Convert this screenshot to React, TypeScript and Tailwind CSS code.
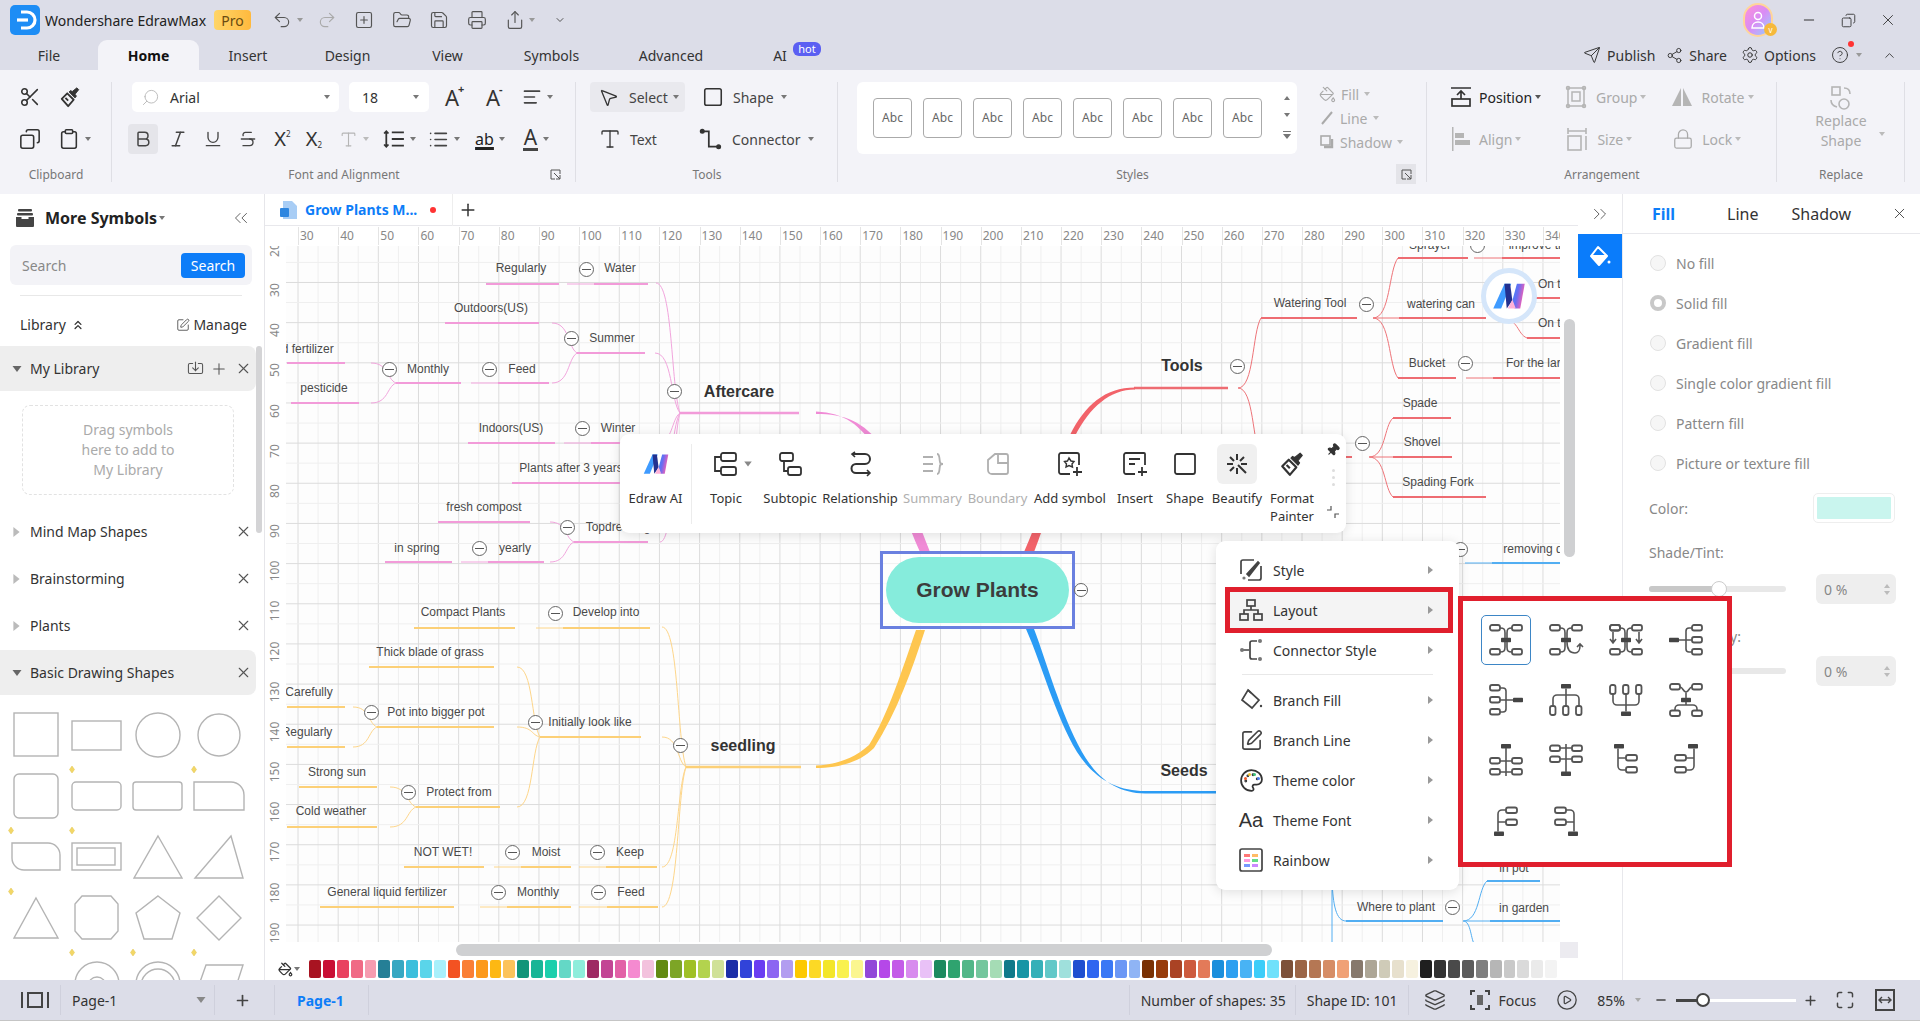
import React from 'react';
import {
  AlignLeft, Bold, ChevronDown, ChevronUp, ChevronsLeft, ChevronsRight, ChevronsUp, CircleHelp, CirclePlay,
  Clipboard, Copy, FolderOpen, Import, Italic, Layers, List, Lock, Maximize, Minus, MousePointer2, PaintBucket,
  Palette, Pin, Plus, Printer, Redo2, Save, Scissors, Search, Send, Settings, Share2, Share,
  Square, SquarePen, SquarePlus, Strikethrough, Type, Underline, Undo2, X,
} from 'lucide-react';

const Caret = ({ c = 'border-t-[#777]' }: { c?: string }) => (
  <span className={`inline-block w-0 h-0 border-x-[3px] border-t-[4px] border-x-transparent ${c}`} />
);
const CaretRight = ({ c = 'border-l-[#999]' }: { c?: string }) => (
  <span className={`inline-block w-0 h-0 border-y-[4px] border-l-[5px] border-y-transparent ${c}`} />
);

const EdrawM = ({ id, size }: { id: string; size: number }) => (
  <svg width={size} height={size} viewBox="0 0 32 32">
    <defs>
      <linearGradient id={id} x1="0" y1="0" x2="1" y2="0.4">
        <stop offset="0" stopColor="#2f8bff" />
        <stop offset="0.5" stopColor="#6c6cf0" />
        <stop offset="1" stopColor="#ff5fb0" />
      </linearGradient>
    </defs>
    <path d="M2 27 12 5h6l-9 22z" fill="#3f9bff" />
    <path d="M12 5h5l2 15-5 7z" fill="#23308f" />
    <path d="M19 20 23 5h7l-4 22-5 0z" fill={`url(#${id})`} />
    <path d="M15 27l4-8 3 8z" fill="#ffb1d8" />
  </svg>
);

const BrushIcon = ({ size = 24, color = '#333' }: { size?: number; color?: string }) => (
  <svg width={size} height={size} viewBox="0 0 24 24" fill="none" stroke={color} strokeWidth="2" strokeLinejoin="round">
    <path d="M9 8 3 14l7 8 6-7z" />
    <path d="M11 6.500 17.500 13 19 11l-1.500-2 4-5-2-2-5 4-2-1z" fill={color} strokeWidth="1" />
    <path d="M7 13l3 3" />
  </svg>
);

/* ---------- top ---------- */

const TABS: [string, string][] = [
  ['File', 'w-[98px]'], ['Insert', 'w-[98px]'], ['Design', 'w-[101px]'], ['View', 'w-[99px]'],
  ['Symbols', 'w-[109px]'], ['Advanced', 'w-[130px]'],
];

function TitleBar() {
  return (
    <div className="h-[40px] flex items-center">
      <svg width="30" height="30" viewBox="0 0 30 30" className="ml-[10px]">
        <rect width="30" height="30" rx="5" fill="#1d8df5" />
        <path d="M11 7h6a8 8 0 0 1 0 16h-6" fill="none" stroke="#fff" strokeWidth="3.2" />
        <path d="M7 15h11" stroke="#fff" strokeWidth="3.2" />
      </svg>
      <span className="ml-[5px] w-[169px] text-[14px] text-[#222] whitespace-nowrap">Wondershare EdrawMax</span>
      <span className="w-[37px] h-[20px] flex items-center justify-center rounded-[4px] bg-gradient-to-r from-[#ffd566] to-[#ffb93d] text-[14px] text-[#6a4a10]">Pro</span>
      <div className="ml-[21px] flex items-center text-[#555]">
        <Undo2 size={20} strokeWidth={1.4} />
        <span className="ml-[5px] flex"><Caret c="border-t-[#999]" /></span>
        <Redo2 size={20} strokeWidth={1.4} className="ml-[14px] text-[#aaa]" />
        <SquarePlus size={20} strokeWidth={1.4} className="ml-[17px]" />
        <FolderOpen size={20} strokeWidth={1.4} className="ml-[18px]" />
        <Save size={20} strokeWidth={1.4} className="ml-[17px]" />
        <Printer size={20} strokeWidth={1.4} className="ml-[18px]" />
        <Share size={20} strokeWidth={1.4} className="ml-[18px]" />
        <span className="ml-[4px] flex"><Caret c="border-t-[#999]" /></span>
        <ChevronDown size={12} className="ml-[19px]" />
      </div>
      <div className="ml-auto flex items-center text-[#333]">
        <div className="relative w-[30px] h-[34px] rounded-full border-[2px] border-[#ffd59a] bg-gradient-to-br from-[#ff8fd8] via-[#d88cf5] to-[#7fd0ff] flex items-center justify-center">
          <svg width="16" height="20" viewBox="0 0 16 20" fill="none" stroke="#fff" strokeWidth="1.5">
            <circle cx="8" cy="6" r="3.5" />
            <path d="M2 18c0-4 3-6 6-6s6 2 6 6z" />
          </svg>
          <span className="absolute right-[-6px] bottom-[-1px] w-[13px] h-[13px] rounded-full bg-[#f6b93b] text-[8px] leading-[13px] text-center text-white">v</span>
        </div>
        <Minus size={16} strokeWidth={1.5} className="ml-[28px]" />
        <Copy size={15} strokeWidth={1.4} className="ml-[24px] -scale-x-100" />
        <X size={18} strokeWidth={1.2} className="ml-[23px] mr-[23px]" />
      </div>
    </div>
  );
}

function TabBar() {
  return (
    <div className="h-[30px] flex items-end text-[14px] text-[#333]">
      {TABS.slice(0, 1).map(([t, w]) => (
        <div key={t} className={`${w} h-full flex items-center justify-center`}>{t}</div>
      ))}
      <div className="w-[101px] h-full bg-[#f3f3f8] rounded-t-[9px] flex items-center justify-center font-bold text-[#111]">Home</div>
      {TABS.slice(1).map(([t, w]) => (
        <div key={t} className={`${w} h-full flex items-center justify-center`}>{t}</div>
      ))}
      <div className="relative w-[88px] h-full flex items-center justify-center">
        AI
        <span className="absolute left-[57px] top-[2px] w-[28px] h-[14px] rounded-[6px] bg-[#5b5ff2] text-white text-[11px] leading-[13px] text-center">hot</span>
      </div>
      <div className="ml-auto h-full flex items-center text-[#333]">
        <Send size={18} strokeWidth={1.3} />
        <span className="ml-[6px]">Publish</span>
        <Share2 size={17} strokeWidth={1.3} className="ml-[11px]" />
        <span className="ml-[6px]">Share</span>
        <Settings size={18} strokeWidth={1.3} className="ml-[14px]" />
        <span className="ml-[5px]">Options</span>
        <span className="relative ml-[15px] flex">
          <CircleHelp size={18} strokeWidth={1.2} />
          <span className="absolute right-[-5px] top-[-5px] w-[6px] h-[6px] rounded-full bg-[#f33]" />
        </span>
        <span className="ml-[7px] flex"><Caret c="border-t-[#999]" /></span>
        <ChevronUp size={15} strokeWidth={1.4} className="ml-[20px] mr-[23px]" />
      </div>
    </div>
  );
}

const Group = ({ w, label, launcher, active, children }: { w: string; label: string; launcher?: boolean; active?: boolean; children: React.ReactNode }) => (
  <div className={`${w} relative flex flex-col pt-3`}>
    <div className="h-[72px] shrink-0">{children}</div>
    <div className="mt-[10px] text-center text-[12px] leading-[22px] text-[#777]">{label}</div>
    <div className="absolute right-0 top-3 bottom-[12px] w-px bg-[#dfdfe5]" />
    {launcher && (
      <div className={`absolute right-[11px] bottom-[10px] w-[20px] h-[20px] flex items-center justify-center ${active ? 'bg-[#e4e4e9]' : ''}`}>
        <svg width="11" height="11" viewBox="0 0 11 11" fill="none" stroke="#555" strokeWidth="1">
          <path d="M10 5V1H1v9h4M4 4l6 6M10 6v4H6" />
        </svg>
      </div>
    )}
  </div>
);

const Row = ({ cls = '', children }: { cls?: string; children: React.ReactNode }) => (
  <div className={`h-[30px] flex items-center ${cls}`}>{children}</div>
);

const Cell = ({ w, cls = '', children }: { w: string; cls?: string; children: React.ReactNode }) => (
  <div className={`${w} h-[30px] flex items-center justify-center gap-[5px] text-[#444] ${cls}`}>{children}</div>
);

const A = ({ sign }: { sign: string }) => (
  <span className="relative text-[22px] leading-none text-[#333]">A<span className="absolute left-[13px] top-[-3px] text-[11px] font-bold">{sign}</span></span>
);

const XS = ({ sup }: { sup?: boolean }) => (
  <span className="text-[20px] leading-none text-[#333]">X<span className={`text-[8px] ${sup ? 'align-[9px]' : 'align-[-2px]'}`}>2</span></span>
);

function Ribbon() {
  return (
    <div className="h-[124px] bg-[#f3f3f8] flex shrink-0">
      <Group w="w-[112px]" label="Clipboard">
        <Row cls="ml-[10px]">
          <Cell w="w-[40px]"><Scissors size={22} strokeWidth={1.7} className="text-[#333]" /></Cell>
          <Cell w="w-[40px]"><BrushIcon size={22} /></Cell>
        </Row>
        <Row cls="ml-[10px] mt-3">
          <Cell w="w-[40px]"><Copy size={22} strokeWidth={1.7} className="text-[#333] -scale-x-100" /></Cell>
          <Cell w="w-[48px]"><Clipboard size={22} strokeWidth={1.7} className="text-[#333]" /><Caret /></Cell>
        </Row>
      </Group>

      <Group w="w-[464px]" label="Font and Alignment" launcher>
        <Row cls="ml-[20px]">
          <div className="w-[207px] h-[30px] bg-white rounded-[5px] flex items-center px-[9px] text-[14px] text-[#333]">
            <Search size={19} strokeWidth={1.2} className="text-[#bbb] -scale-x-100" />
            <span className="ml-[10px]">Arial</span>
            <span className="ml-auto flex"><Caret /></span>
          </div>
          <div className="ml-[10px] w-[80px] h-[30px] bg-white rounded-[5px] flex items-center px-[13px] text-[14px] text-[#333]">
            18<span className="ml-auto flex -mr-[3px]"><Caret /></span>
          </div>
          <Cell w="w-[42px]" cls="ml-[2px]"><A sign="+" /></Cell>
          <Cell w="w-[40px]"><A sign="-" /></Cell>
          <Cell w="w-[48px]"><AlignLeft size={20} strokeWidth={2} /><Caret /></Cell>
        </Row>
        <Row cls="ml-[16px] mt-3">
          <Cell w="w-[30px]" cls="bg-[#e5e5ea] rounded-[4px]"><Bold size={20} strokeWidth={1.8} /></Cell>
          <Cell w="w-[40px]"><Italic size={20} strokeWidth={1.8} /></Cell>
          <Cell w="w-[30px]"><Underline size={20} strokeWidth={1.6} /></Cell>
          <Cell w="w-[40px]"><Strikethrough size={20} strokeWidth={1.6} /></Cell>
          <Cell w="w-[29px]"><XS sup /></Cell>
          <Cell w="w-[34px]"><XS /></Cell>
          <Cell w="w-[46px]" cls="text-[#b5b5b5]"><Type size={19} strokeWidth={1.4} /><Caret c="border-t-[#bbb]" /></Cell>
          <Cell w="w-[44px]">
            <svg width="22" height="22" viewBox="0 0 20 20" fill="none" stroke="#333" strokeWidth="1.6"><path d="M8 4h11M8 10h11M8 16h11M3 3v14M1 5l2-2 2 2M1 15l2 2 2-2" /></svg>
            <Caret />
          </Cell>
          <Cell w="w-[46px]"><List size={21} strokeWidth={1.8} /><Caret /></Cell>
          <Cell w="w-[46px]">
            <span className="text-[16px] leading-[18px] text-[#222] underline decoration-[3px] underline-offset-[2px]">ab</span><Caret />
          </Cell>
          <Cell w="w-[46px]">
            <span className="text-[21px] leading-[21px] text-[#333] border-b-[3px] border-[#444] px-[1px]">A</span><Caret />
          </Cell>
        </Row>
      </Group>

      <Group w="w-[262px]" label="Tools">
        <Row cls="ml-[14px] text-[14px] text-[#444]">
          <div className="w-[95px] h-[30px] rounded-[4px] bg-[#e9e9ee] flex items-center pl-[8px]">
            <MousePointer2 size={21} strokeWidth={1.5} className="text-[#333]" />
            <span className="ml-[10px]">Select</span>
            <span className="ml-[5px] flex"><Caret /></span>
          </div>
          <Square size={22} strokeWidth={1.7} className="ml-[17px] text-[#333]" />
          <span className="ml-[9px]">Shape</span>
          <span className="ml-[7px] flex"><Caret /></span>
        </Row>
        <Row cls="ml-[14px] mt-3 text-[14px] text-[#444]">
          <div className="w-[95px] flex items-center pl-[8px]">
            <Type size={24} strokeWidth={1.3} className="text-[#333]" />
            <span className="ml-[8px]">Text</span>
          </div>
          <svg width="24" height="24" viewBox="0 0 22 22" fill="none" stroke="#333" strokeWidth="1.6" className="ml-[14px]">
            <path d="M3 4h6v14h8" /><circle cx="3" cy="4" r="1.5" fill="#333" /><circle cx="18" cy="18" r="1.5" fill="#333" />
          </svg>
          <span className="ml-[9px]">Connector</span>
          <span className="ml-[7px] flex"><Caret /></span>
        </Row>
      </Group>

      <Group w="w-[589px]" label="Styles" launcher active>
        <div className="flex h-[72px]">
          <div className="ml-[19px] w-[440px] h-[72px] bg-white rounded-[6px] flex items-center pl-[16px] pr-[7px]">
            <div className="flex gap-[11px]">
              {[0, 1, 2, 3, 4, 5, 6, 7].map((i) => (
                <div key={i} className="w-[39px] h-[40px] rounded-[4px] border border-[#aaa] flex items-center justify-center text-[12px] text-[#666]">Abc</div>
              ))}
            </div>
            <div className="ml-auto h-full flex flex-col items-center justify-around py-[7px] -mr-[1px]">
              <Caret c="border-t-[#777] rotate-180" />
              <Caret />
              <svg width="8" height="9" viewBox="0 0 8 9" fill="#777"><path d="M0 0h8v1H0zM0 3h8L4 8z" /></svg>
            </div>
          </div>
          <div className="ml-[22px] flex flex-col text-[14px] text-[#aaa]">
            {[
              ['Fill', <PaintBucket key="f" size={17} strokeWidth={1.6} />],
              ['Line', <svg key="l" width="16" height="16" viewBox="0 0 16 16" fill="none" stroke="#aaa" strokeWidth="2"><path d="M13 2 3 14" /></svg>],
              ['Shadow', <svg key="s" width="16" height="16" viewBox="0 0 16 16" fill="none" stroke="#aaa" strokeWidth="1.6"><rect x="2" y="2" width="9" height="9" /><path d="M13 5v8H5" strokeWidth="2.4" /></svg>],
            ].map(([t, ic], i) => (
              <div key={i} className="h-[24px] flex items-center gap-[5px]">{ic}<span>{t}</span><Caret c="border-t-[#bbb]" /></div>
            ))}
          </div>
        </div>
      </Group>

      <Group w="w-[350px]" label="Arrangement">
        <Row cls="ml-[24px] text-[14px] text-[#aaa]">
          <svg width="20" height="22" viewBox="0 0 20 22" fill="none" stroke="#333" strokeWidth="1.7"><path d="M0 2h20M10 13V5M6 9l4-4 4 4" /><rect x="1" y="13" width="18" height="7" /></svg>
          <span className="ml-[8px] text-[#222]">Position</span>
          <span className="ml-[3px] flex"><Caret c="border-t-[#555]" /></span>
          <svg width="22" height="24" viewBox="0 0 22 24" fill="none" stroke="#b5b5b5" strokeWidth="1.5" className="ml-[24px]"><rect x="3" y="3" width="16" height="18" /><rect x="7" y="7" width="8" height="9" /><circle cx="3" cy="3" r="1.5" /><circle cx="19" cy="3" r="1.5" /><circle cx="3" cy="21" r="1.5" /><circle cx="19" cy="21" r="1.5" /></svg>
          <span className="ml-[9px]">Group</span>
          <span className="ml-[3px] flex"><Caret c="border-t-[#bbb]" /></span>
          <svg width="24" height="24" viewBox="0 0 24 24" fill="#b5b5b5" className="ml-[24px]"><path d="M11 3v18H2zM13 3v18h9z" /></svg>
          <span className="ml-[7px]">Rotate</span>
          <span className="ml-[3px] flex"><Caret c="border-t-[#bbb]" /></span>
        </Row>
        <Row cls="ml-[24px] mt-3 text-[14px] text-[#aaa]">
          <svg width="20" height="24" viewBox="0 0 20 24" fill="#b5b5b5"><rect x="1" y="0" width="1.5" height="24" /><rect x="4" y="6" width="9" height="5" /><rect x="4" y="13" width="15" height="5" /></svg>
          <span className="ml-[8px]">Align</span>
          <span className="ml-[3px] flex"><Caret c="border-t-[#bbb]" /></span>
          <svg width="22" height="24" viewBox="0 0 22 24" fill="none" stroke="#b5b5b5" strokeWidth="1.6" className="ml-[45px]"><path d="M2 1v6M20 1v6M2 4h18" /><rect x="2" y="9" width="13" height="14" /><path d="M20 9v14" /></svg>
          <span className="ml-[9px]">Size</span>
          <span className="ml-[3px] flex"><Caret c="border-t-[#bbb]" /></span>
          <Lock size={22} strokeWidth={1.4} className="ml-[40px]" />
          <span className="ml-[8px]">Lock</span>
          <span className="ml-[3px] flex"><Caret c="border-t-[#bbb]" /></span>
        </Row>
      </Group>

      <Group w="w-[128px]" label="Replace">
        <div className="relative flex flex-col items-center text-[14px] leading-[20px] text-[#aaa] w-full">
          <svg width="22" height="24" viewBox="0 0 22 24" fill="none" stroke="#b5b5b5" strokeWidth="1.6" className="mt-[4px]"><rect x="2" y="1" width="8" height="8" /><circle cx="14" cy="18" r="5" /><path d="M14 2c4 0 6 2 6 6M1 14c0 4 2 6 6 7" /></svg>
          <span className="mt-[1px]">Replace</span>
          <span>Shape</span>
          <span className="absolute right-[20px] top-[50px] flex"><Caret c="border-t-[#bbb]" /></span>
        </div>
      </Group>
    </div>
  );
}

/* ---------- left panel ---------- */

const LibRow = ({ label, open }: { label: string; open?: boolean }) => (
  <div className={`h-[45px] w-[256px] shrink-0 flex items-center text-[14px] text-[#333] ${open ? 'bg-[#eeeeee] rounded-r-[8px]' : ''}`}>
    <span className="ml-[14px] w-[16px] flex">
      {open ? <Caret c="border-t-[#666] scale-150" /> : <CaretRight c="border-l-[#bbb] scale-125" />}
    </span>
    <span>{label}</span>
    <X size={17} strokeWidth={1.5} className="ml-auto mr-[4px] text-[#555]" />
  </div>
);

const S = 'fill-none stroke-[#b4b4b4] stroke-[1.4]';
const SHAPES: { m?: boolean; el: React.ReactNode }[] = [
  { el: <rect x="8" y="8" width="44" height="43" /> },
  { el: <rect x="5" y="16" width="49" height="29" /> },
  { el: <ellipse cx="30" cy="30" rx="22" ry="22" /> },
  { el: <ellipse cx="30" cy="30" rx="21" ry="21" /> },
  { el: <rect x="8" y="8" width="44" height="44" rx="5" /> },
  { m: true, el: <rect x="5" y="16" width="49" height="28" rx="4" /> },
  { el: <rect x="5" y="16" width="49" height="28" rx="3" /> },
  { m: true, el: <path d="M5 16h37a13 13 0 0 1 13 13v15H5z" /> },
  { m: true, el: <path d="M6 16h36a12 12 0 0 1 12 12v15H18a12 12 0 0 1-12-12z" /> },
  { m: true, el: <g><rect x="5" y="16" width="49" height="27" /><rect x="10" y="21" width="38" height="17" /></g> },
  { el: <path d="M30 9 54 51H6z" /> },
  { el: <path d="M42 9 54 51H6z" /> },
  { m: true, el: <path d="M30 10 52 50H8z" /> },
  { el: <path d="M15 8h29l7 8v27l-7 8H15l-7-8V16z" /> },
  { el: <path d="M30 8 52 25 44 51H16L8 25z" /> },
  { el: <path d="M30 8 52 30 30 52 8 30z" /> },
  { el: <path d="M5 50a25 22 0 0 1 49 0" /> },
  { m: true, el: <g><ellipse cx="30" cy="35" rx="22" ry="22" /><ellipse cx="30" cy="37" rx="9" ry="9" /></g> },
  { m: true, el: <g><ellipse cx="30" cy="35" rx="22" ry="22" /><ellipse cx="30" cy="37" rx="17" ry="17" /></g> },
  { m: true, el: <path d="M17 16h37l-11 34H5z" /> },
];

function LeftPanel() {
  return (
    <div className="w-[265px] shrink-0 border-r border-[#e6e6ea] bg-white flex flex-col overflow-hidden relative">
      <div className="h-[51px] shrink-0 flex items-center pl-[16px] pb-[3px]">
        <svg width="18" height="18" viewBox="0 0 18 18" fill="#444">
          <rect x="2" y="0" width="14" height="2.500" rx="1" />
          <rect x="1" y="4" width="16" height="2.500" rx="1" />
          <path d="M0 8h5.500v2h7V8H18v9a1 1 0 0 1-1 1H1a1 1 0 0 1-1-1z" />
        </svg>
        <span className="ml-[11px] text-[16px] font-bold text-[#222]">More Symbols</span>
        <span className="ml-[2px] flex"><Caret /></span>
        <ChevronsLeft size={22} strokeWidth={1} className="ml-auto mr-[12px] text-[#555]" />
      </div>
      <div className="mx-[10px] w-[242px] h-[40px] shrink-0 rounded-[6px] bg-[#f3f3f7] flex items-center pl-[12px] text-[14px] text-[#888]">
        Search
        <span className="ml-auto mr-[7px] w-[64px] h-[25px] rounded-[4px] bg-[#0d7df8] text-white text-center leading-[25px]">Search</span>
      </div>
      <div className="mx-[20px] w-[222px] mt-[10px] h-px shrink-0 bg-[#e8e8e8]" />
      <div className="h-[50px] shrink-0 flex items-center text-[14px] text-[#333] pl-[20px] pt-[7px]">
        Library
        <ChevronsUp size={14} strokeWidth={2.2} className="ml-[5px]" />
        <SquarePen size={14} strokeWidth={1.3} className="ml-auto" />
        <span className="ml-[3px] mr-[17px]">Manage</span>
      </div>
      <div className="h-[45px] w-[256px] shrink-0 flex items-center bg-[#eeeeee] rounded-r-[8px] text-[14px] text-[#333]">
        <span className="ml-[14px] w-[16px] flex"><Caret c="border-t-[#666] scale-150" /></span>
        My Library
        <Import size={17} strokeWidth={1.5} className="ml-auto text-[#555]" />
        <Plus size={18} strokeWidth={1.4} className="ml-[6px] text-[#555]" />
        <X size={17} strokeWidth={1.5} className="ml-[7px] mr-[4px] text-[#555]" />
      </div>
      <div className="mx-[22px] mt-[14px] w-[212px] h-[90px] shrink-0 rounded-[8px] border border-dashed border-[#e2e2e2] text-center text-[14px] leading-[20px] text-[#aaa] flex flex-col justify-center">
        <span>Drag symbols</span><span>here to add to</span><span>My Library</span>
      </div>
      <div className="mt-[14px] shrink-0"><LibRow label="Mind Map Shapes" /></div>
      <div className="mt-[2px] shrink-0"><LibRow label="Brainstorming" /></div>
      <div className="mt-[2px] shrink-0"><LibRow label="Plants" /></div>
      <div className="mt-[2px] shrink-0"><LibRow label="Basic Drawing Shapes" open /></div>
      <div className="mt-[10px] ml-[6px] shrink-0 grid grid-cols-[repeat(4,61px)] auto-rows-[61px]">
        {SHAPES.map((s, i) => (
          <svg key={i} width="61" height="61" viewBox="0 0 61 61" className={S}>
            {s.el}
            {s.m && <path d="M5 0l2.500 3.500L5 7 2.500 3.500z" className="fill-[#f3d766] stroke-[#e0c450] stroke-[0.5]" />}
          </svg>
        ))}
      </div>
      <div className="absolute left-[256px] top-[152px] w-[6px] h-[187px] rounded-full bg-[#d4d4d6]" />
    </div>
  );
}

/* ---------- mind map ---------- */

type L = [string, number, number];
type Seg = [number, number, number];
type Cv = [number, number, number, number];
type Branch = { color: string; thin: string; labels: L[]; under: Seg[]; lead: Seg[]; curves: Cv[]; dots: [number, number][] };

const pink: Branch = {
  color: '#f29bd9', thin: '#f2a5dd',
  labels: [['Regularly', 521, 268], ['Water', 620, 268], ['Outdoors(US)', 491, 308], ['Summer', 612, 338], ['Monthly', 428, 369], ['Feed', 522, 369], ['Liquid fertilizer', 295, 349], ['pesticide', 324, 388], ['Indoors(US)', 511, 428], ['Winter', 618, 428], ['Plants after 3 years', 571, 468], ['fresh compost', 484, 507], ['Topdressing', 618, 527], ['in spring', 417, 548], ['yearly', 515, 548]],
  under: [[486, 559, 284], [594, 648, 284], [445, 539, 323], [577, 645, 353], [396, 461, 383], [498, 549, 383], [287, 345, 363], [291, 359, 403], [468, 555, 443], [591, 650, 443], [512, 650, 483], [438, 530, 522], [574, 648, 542], [385, 452, 562], [488, 544, 562]],
  lead: [[567, 594, 284], [471, 498, 383], [564, 591, 443], [461, 488, 562]],
  curves: [[656, 283, 680, 413], [655, 353, 680, 413], [552, 323, 577, 353], [552, 383, 577, 353], [371, 363, 396, 383], [371, 403, 396, 383], [550, 522, 574, 542], [550, 562, 574, 542], [657, 443, 680, 413], [657, 483, 680, 413], [660, 542, 680, 413]],
  dots: [[586, 269], [571, 338], [389, 369], [489, 369], [582, 428], [567, 527], [479, 548], [674, 391]],
};

const yellow: Branch = {
  color: '#fcd077', thin: '#fdd68a',
  labels: [['Compact Plants', 463, 612], ['Develop into', 606, 612], ['Thick blade of grass', 430, 652], ['Carefully', 309, 692], ['Pot into bigger pot', 436, 712], ['Regularly', 307, 732], ['Initially look like', 590, 722], ['Strong sun', 337, 772], ['Cold weather', 331, 811], ['Protect from', 459, 792], ['NOT WET!', 443, 852], ['Moist', 546, 852], ['Keep', 630, 852], ['General liquid fertilizer', 387, 892], ['Monthly', 538, 892], ['Feed', 631, 892]],
  under: [[414, 515, 628], [563, 650, 628], [369, 494, 667], [287, 345, 707], [377, 494, 727], [287, 345, 747], [540, 641, 737], [299, 377, 787], [287, 377, 827], [416, 500, 807], [404, 484, 867], [521, 571, 867], [606, 657, 867], [320, 454, 907], [507, 571, 907], [607, 658, 907]],
  lead: [[536, 563, 628], [494, 521, 867], [579, 606, 867], [480, 507, 907], [579, 607, 907]],
  curves: [[662, 627, 686, 767], [662, 737, 686, 767], [662, 867, 686, 767], [662, 907, 686, 767], [517, 667, 540, 737], [517, 727, 540, 737], [517, 807, 540, 737], [353, 707, 377, 727], [353, 747, 377, 727], [390, 787, 416, 807], [390, 827, 416, 807]],
  dots: [[555, 613], [371, 712], [535, 722], [408, 792], [680, 745], [512, 852], [597, 852], [498, 892], [598, 892]],
};

const red: Branch = {
  color: '#ee6c72', thin: '#ee7479',
  labels: [['Watering Tool', 1310, 303], ['Sprayer', 1430, 245], ['improve the', 1540, 245], ['watering can', 1441, 304], ['On the', 1556, 284], ['On the', 1556, 323], ['Bucket', 1427, 363], ['For the large', 1540, 363], ['Spade', 1420, 403], ['Shovel', 1422, 442], ['Spading Fork', 1438, 482]],
  under: [[1261, 1357, 318], [1398, 1468, 258], [1502, 1560, 258], [1399, 1486, 318], [1532, 1560, 298], [1527, 1560, 338], [1398, 1456, 378], [1493, 1560, 378], [1393, 1451, 418], [1393, 1452, 457], [1393, 1486, 497], [1261, 1352, 457]],
  lead: [[1474, 1502, 258], [1466, 1493, 378], [1370, 1393, 457], [1373, 1399, 318]],
  curves: [[1238, 388, 1261, 318], [1238, 388, 1261, 457], [1373, 318, 1398, 258], [1373, 318, 1398, 378], [1369, 457, 1393, 418], [1369, 457, 1393, 497], [1500, 318, 1527, 338]],
  dots: [[1237, 366], [1366, 304], [1477, 245], [1465, 363], [1362, 443]],
};

const blue: Branch = {
  color: '#52aef2', thin: '#52aef2',
  labels: [['removing dead', 1543, 549], ['in pot', 1514, 868], ['Where to plant', 1396, 907], ['in garden', 1524, 908]],
  under: [[1492, 1560, 563], [1487, 1540, 881], [1346, 1443, 921], [1490, 1560, 921]],
  lead: [[1465, 1492, 563], [1464, 1490, 921]],
  curves: [[1463, 921, 1487, 881], [1463, 921, 1475, 945]],
  dots: [[1460, 549], [1452, 907]],
};

const BRANCHES = [pink, yellow, red, blue];
const cv = ([x1, y1, x2, y2]: Cv) => {
  const dx = x2 - x1;
  return `M${x1} ${y1}C${x1 + dx * 0.7} ${y1} ${x1 + dx * 0.62} ${y2 - (y2 - y1) * 0.2} ${x2} ${y2}`;
};

const GX = Array.from({ length: 64 }, (_, i) => 298 + i * 20.08 - 20.08);
const GY = Array.from({ length: 36 }, (_, i) => 262.4 + i * 20.08);

function MindMap() {
  return (
    <div className="relative w-[1295px] h-[716px] overflow-hidden bg-[#fdfdfd] font-['Liberation_Sans',sans-serif] text-[12px] text-[#4a4a4a]">
      <svg width="1295" height="716" viewBox="265 226 1295 716" className="absolute inset-0">
        {GX.map((x, i) => <line key={i} x1={x} x2={x} y1="226" y2="942" stroke={i % 2 ? '#dcdcdc' : '#efefef'} />)}
        {GY.map((y, i) => <line key={i} x1="265" x2="1560" y1={y} y2={y} stroke={i % 2 ? '#dcdcdc' : '#efefef'} />)}
        {BRANCHES.map((b, k) => (
          <g key={k} fill="none">
            {b.curves.map((c, i) => <path key={i} d={cv(c)} stroke={b.thin} strokeWidth="1" />)}
            {b.lead.map(([a, z, y], i) => <line key={i} x1={a} x2={z} y1={y} y2={y} stroke={b.thin} strokeWidth="1" />)}
            {b.under.map(([a, z, y], i) => <line key={i} x1={a} x2={z} y1={y} y2={y} stroke={b.color} strokeWidth="2" />)}
          </g>
        ))}
        {/* main branches */}
        <path d="M680 413H799" stroke="#f29bd9" strokeWidth="2.4" />
        <path d="M686 767H801" stroke="#fcd077" strokeWidth="2.4" />
        <path d="M1134 388H1228" stroke="#ee6c72" strokeWidth="2.4" />
        <path d="M1332 880V942M1332 880C1333 905 1336 921 1346 921" stroke="#52aef2" fill="none" />
        <path d="M816 411.500C845 413 860 425 875 448C895 480 905 520 920 552L930 552C915 515 905 480 883 447C863 421 845 414 816 414Z" fill="#f08bd6" />
        <path d="M916 630L925 630C912 670 897 712 874 748C858 764 835 768 816 768V765.500C832 765 853 760 869 745C888 715 902 670 916 630Z" fill="#fec64f" />
        <path d="M1135 387.500C1105 387.500 1085 405 1070 435C1055 470 1040 515 1024 552L1034 552C1048 515 1062 470 1075 436C1090 407 1110 389.500 1135 389.500Z" fill="#f2636a" />
        <path d="M1026 629L1034 629C1046 660 1060 712 1082 752C1098 780 1118 793 1145 793.500L1216 793.500V791H1145C1118 791 1095 780 1077 752C1055 715 1042 665 1026 629Z" fill="#2b9cf5" />
      </svg>

      {BRANCHES.flatMap((b) => b.labels).map(([t, x, y], i) => (
        <div key={i} className="absolute -translate-x-1/2 -translate-y-1/2 whitespace-nowrap" style={{ left: x - 265, top: y - 226 }}>{t}</div>
      ))}
      {BRANCHES.flatMap((b) => b.dots).map(([x, y], i) => (
        <div key={i} className="absolute w-[15px] h-[15px] -ml-[7.5px] -mt-[7.5px] rounded-full border border-[#666] bg-white flex items-center justify-center" style={{ left: x - 265, top: y - 226 }}>
          <span className="w-[9px] h-px bg-[#555]" />
        </div>
      ))}

      {([['Aftercare', 739, 392], ['seedling', 743, 746], ['Tools', 1182, 366], ['Seeds', 1184, 771]] as L[]).map(([t, x, y]) => (
        <div key={t} className="absolute -translate-x-1/2 -translate-y-1/2 text-[16px] font-bold text-[#333]" style={{ left: x - 265, top: y - 226 }}>{t}</div>
      ))}

      {/* selected root topic */}
      <div className="absolute left-[615px] top-[325px] w-[195px] h-[78px] border-[3px] border-[#6a80e0] flex items-center justify-center bg-white/60">
        <div className="w-[183px] h-[66px] shrink-0 rounded-[33px] bg-[#86ecdc] flex items-center justify-center text-[21px] font-bold text-[#3c3c3c]">Grow Plants</div>
      </div>
      <div className="absolute left-[809px] top-[357px] w-[14px] h-[14px] rounded-full border border-[#666] bg-white flex items-center justify-center">
        <span className="w-[9px] h-px bg-[#555]" />
      </div>

      {/* assistant bubble */}
      <div className="absolute left-[1216px] top-[42px] w-[56px] h-[56px] rounded-full border-[5px] border-[#d5e6fa] bg-white flex items-center justify-center">
        <EdrawM id="m2" size={36} />
      </div>

      {/* rulers */}
      <div className="absolute left-0 top-[20px] bottom-0 w-[21px] overflow-hidden bg-white font-['Noto_Sans',sans-serif] text-[12px] text-[#888]">
        {Array.from({ length: 18 }, (_, i) => (
          <span key={i} className="absolute left-[-5px] w-[30px] h-[14px] leading-[14px] text-center -rotate-90 origin-center" style={{ top: -3 + i * 40.16 }}>{20 + i * 10}</span>
        ))}
      </div>
      <div className="absolute left-0 top-0 w-full h-[20px] overflow-hidden bg-white font-['Noto_Sans',sans-serif] text-[12px] text-[#888]">
        {Array.from({ length: 32 }, (_, i) => (
          <span key={i} className="absolute top-[1px] leading-[18px] border-l border-[#e4e4e4] pl-[1px]" style={{ left: 33 + i * 40.16 }}>{30 + i * 10}</span>
        ))}
      </div>
    </div>
  );
}

const SWATCHES = [
  '#a81321', '#c90f34', '#e9425f', '#f06a85', '#f69cb0', '#257f96', '#37a8c2', '#3cbfdc', '#5ad5ea', '#a8f0fb',
  '#f35222', '#fa7f35', '#fc9a1c', '#fdb813', '#fcc35a', '#119479', '#18b596', '#1bcfac', '#64d8c6', '#8eeddb',
  '#9e2a63', '#c34594', '#e261a7', '#f58ad0', '#f3c2dd', '#628a12', '#7da526', '#a0c026', '#b3d34e', '#d0e198',
  '#1d2fa8', '#3143d9', '#6a3df2', '#8c66f2', '#b29df0', '#fdc900', '#fcd925', '#f3e62a', '#f9f14f', '#fbf68f',
  '#9248d8', '#b548e8', '#c45ce8', '#d88cee', '#e9c1f7', '#1d8a5f', '#2fa36f', '#52b788', '#74c69d', '#a5dcb5',
  '#0f7a8a', '#1795a5', '#35b0b8', '#62c8c8', '#9fe0dc', '#1f4fd0', '#2f66f0', '#3a78f5', '#6b97f5', '#8fb4f5',
  '#7a3103', '#973c0b', '#aa4324', '#cd5b3e', '#e37a59', '#1b8fdc', '#2ea0f0', '#48b3f5', '#3ccdf9', '#6fe1fb',
  '#7d5139', '#9b6546', '#b57754', '#d68d66', '#f0a176', '#87796c', '#ada696', '#cfcbb8', '#e7e0cd', '#f6f1df',
  '#1f1f1f', '#333333', '#4a4a4a', '#5c5c5c', '#7f7f7f', '#b6b6b6', '#c9c9c9', '#dadada', '#eaeaea', '#f3f3f3',
];

function CanvasColumn() {
  return (
    <div className="w-[1313px] shrink-0 flex flex-col bg-white">
      <div className="h-[32px] shrink-0 flex items-center border-b border-[#e8e8ec]">
        <svg width="18" height="20" viewBox="0 0 18 20" className="ml-[15px]">
          <path d="M3 1h9l5 5v13H3z" fill="#a8cdf5" />
          <rect x="0" y="8" width="9" height="9" rx="1" fill="#2e86e0" />
        </svg>
        <span className="ml-[7px] w-[125px] text-[14px] font-bold text-[#0d7df8] whitespace-nowrap">Grow Plants M...</span>
        <span className="w-[6px] h-[6px] rounded-full bg-[#f33]" />
        <span className="ml-[16px] h-[32px] w-px bg-[#eee]" />
        <Plus size={20} strokeWidth={1.8} className="ml-[5px] text-[#333]" />
      </div>
      <div className="flex h-[716px] shrink-0">
        <MindMap />
        <div className="w-[18px] pl-[4px] pt-[93px]">
          <div className="w-[11px] h-[238px] rounded-full bg-[#cfd0d2]" />
        </div>
      </div>
      <div className="h-[16px] shrink-0 flex items-center">
        <div className="ml-[191px] w-[816px] h-[12px] rounded-full bg-[#cfd0d2]" />
        <div className="ml-auto w-[18px] h-full bg-[#ecebf0]" />
      </div>
      <div className="h-[22px] shrink-0 flex items-center">
        <PaintBucket size={15} strokeWidth={2} className="ml-[13px] text-[#333]" />
        <span className="ml-[1px] flex"><Caret /></span>
        <div className="ml-[9px] flex gap-[2px]">
          {SWATCHES.map((c, i) => <span key={i} className="w-[11.9px] h-[18px] rounded-[2px]" style={{ background: c }} />)}
        </div>
      </div>
    </div>
  );
}

/* ---------- right panel ---------- */

const FILLS = ['No fill', 'Solid fill', 'Gradient fill', 'Single color gradient fill', 'Pattern fill', 'Picture or texture fill'];

const Spin = () => (
  <div className="ml-[167px] w-[80px] h-[30px] rounded-[6px] bg-[#eeeeee] flex items-center pl-[8px] text-[14px] text-[#888]">
    0 %
    <span className="ml-auto mr-[6px] flex flex-col gap-[3px]">
      <Caret c="border-t-[#bbb] rotate-180" />
      <Caret c="border-t-[#bbb]" />
    </span>
  </div>
);

function RightPanel() {
  return (
    <>
      <div className="w-[45px] shrink-0 bg-white border-r border-[#e8e8ec] flex flex-col">
        <div className="h-[40px] flex items-center justify-center">
          <ChevronsRight size={22} strokeWidth={1} className="text-[#555]" />
        </div>
        <div className="h-[44px] w-[44px] bg-[#0a7cfb] flex items-center justify-center">
          <svg width="24" height="24" viewBox="0 0 24 24" fill="none" stroke="#fff" strokeWidth="2" strokeLinejoin="round">
            <path d="M10 3 19 12l-8 9-8-9z" />
            <path d="M4 12h14l-7 8z" fill="#fff" />
            <circle cx="21" cy="18" r="1.500" fill="#fff" stroke="none" />
          </svg>
        </div>
      </div>
      <div className="flex-1 bg-white flex flex-col text-[14px] text-[#888]">
        <div className="h-[40px] shrink-0 flex items-center border-b border-[#e8e8ec] text-[16px] text-[#333]">
          <span className="ml-[29px] font-bold text-[#0d7df8]">Fill</span>
          <span className="ml-[52px]">Line</span>
          <span className="ml-[33px]">Shadow</span>
          <X size={17} strokeWidth={1.2} className="ml-auto mr-[12px]" />
        </div>
        <div className="flex flex-col pt-[9px]">
          {FILLS.map((f, i) => (
            <div key={f} className="h-[40px] flex items-center pl-[27px]">
              <span className={i === 1 ? 'w-[16px] h-[16px] rounded-full border-[4px] border-[#c8c8c8] bg-white' : 'w-[16px] h-[16px] rounded-full border border-[#e2e2e2] bg-[#f6f6f6]'} />
              <span className="ml-[10px]">{f}</span>
            </div>
          ))}
        </div>
        <div className="h-[26px] mt-[12px] flex items-center pl-[26px]">
          Color:
          <span className="ml-auto mr-[26px] w-[80px] h-[28px] rounded-[4px] border-[3px] border-white bg-[#c9f5ee] outline outline-[#eeeeee]" />
        </div>
        <div className="h-[20px] mt-[22px] pl-[26px] leading-[20px]">Shade/Tint:</div>
        <div className="mt-[11px] h-[30px] flex items-center pl-[26px]">
          <div className="relative w-[137px] h-[6px] rounded-full bg-[#e8e8e8]">
            <div className="w-[70px] h-full rounded-full bg-[#c8c8c8]" />
            <div className="absolute left-[62px] top-[-5px] w-[16px] h-[16px] rounded-full bg-white border border-[#ccc]" />
          </div>
          <div className="-ml-[137px]"><Spin /></div>
        </div>
        <div className="h-[20px] mt-[23px] pl-[26px] leading-[20px]">Transparency:</div>
        <div className="mt-[9px] h-[30px] flex items-center pl-[26px]">
          <div className="w-[137px] h-[6px] rounded-full bg-[#e8e8e8]" />
          <div className="-ml-[137px]"><Spin /></div>
        </div>
      </div>
    </>
  );
}

/* ---------- status bar ---------- */

const Sep = () => <span className="block h-[30px] w-px bg-[#cfd0dc]" />;

function StatusBar() {
  return (
    <div className="h-[41px] shrink-0 bg-[#dcdde8] border-b border-[#c5c5c5] flex items-center text-[14px] text-[#333]">
      <svg width="30" height="18" viewBox="0 0 30 18" fill="none" stroke="#444" className="ml-[20px]">
        <rect x="8" y="2" width="14" height="14" strokeWidth="2" /><path d="M2 1v16M28 1v16" strokeWidth="2" />
      </svg>
      <span className="ml-[10px]"><Sep /></span>
      <span className="ml-[11px] w-[126px]">Page-1</span>
      <Caret c="border-t-[#888] scale-150" />
      <span className="ml-[10px]"><Sep /></span>
      <Plus size={17} strokeWidth={2.4} className="ml-[19px] text-[#444]" />
      <span className="ml-[23px]"><Sep /></span>
      <span className="ml-[22px] font-bold text-[#0d7df8]">Page-1</span>
      <span className="ml-[24px]"><Sep /></span>
      <div className="ml-auto flex items-center">
        <Sep />
        <span className="ml-[11px]">Number of shapes: 35</span>
        <span className="ml-[9px]"><Sep /></span>
        <span className="ml-[11px]">Shape ID: 101</span>
        <span className="ml-[10px]"><Sep /></span>
        <Layers size={22} strokeWidth={1.5} className="ml-[15px] text-[#444]" />
        <svg width="20" height="20" viewBox="0 0 20 20" fill="none" stroke="#444" strokeWidth="2" className="ml-[24px]">
          <path d="M1 5V1h4M15 1h4v4M1 15v4h4M19 15v4h-4" /><rect x="7" y="5" width="6" height="10" fill="#666" stroke="none" />
        </svg>
        <span className="ml-[9px]">Focus</span>
        <CirclePlay size={22} strokeWidth={1.4} className="ml-[20px] text-[#444]" />
        <span className="ml-[19px]">85%</span>
        <span className="ml-[10px] flex"><Caret c="border-t-[#aaa]" /></span>
        <Minus size={14} strokeWidth={2.4} className="ml-[13px] text-[#444]" />
        <div className="relative ml-[8px] w-[120px] h-[3px] bg-white">
          <div className="w-[27px] h-full bg-[#444]" />
          <div className="absolute left-[20px] top-[-6px] w-[14px] h-[14px] rounded-full border-[2px] border-[#444] bg-white" />
        </div>
        <Plus size={15} strokeWidth={2.4} className="ml-[7px] text-[#444]" />
        <Maximize size={20} strokeWidth={1.8} className="ml-[17px] text-[#444]" />
        <svg width="20" height="22" viewBox="0 0 20 22" fill="none" stroke="#444" strokeWidth="2" className="ml-[20px] mr-[25px]">
          <rect x="1" y="1" width="18" height="20" /><path d="M5 11h10M7 8l-3 3 3 3M13 8l3 3-3 3" strokeWidth="1.4" />
        </svg>
      </div>
    </div>
  );
}

/* ---------- floating toolbar ---------- */

const TB_STROKE = { fill: 'none', stroke: 'currentColor', strokeWidth: 1.8 };
const TOOLS: { w: string; label: React.ReactNode; dim?: boolean; on?: boolean; icon: React.ReactNode }[] = [
  { w: 'w-[68px]', label: 'Topic', icon: (
    <span className="flex items-center gap-[6px] ml-[12px]">
      <svg width="26" height="26" viewBox="0 0 26 26" {...TB_STROKE}><rect x="8" y="2" width="15" height="8" rx="2" /><rect x="8" y="16" width="15" height="8" rx="2" /><path d="M8 6H2v14h6" /></svg>
      <Caret c="border-t-[#888] scale-125" />
    </span>
  ) },
  { w: 'w-[60px]', label: 'Subtopic', icon: <svg width="26" height="26" viewBox="0 0 26 26" {...TB_STROKE}><rect x="3" y="2" width="13" height="8" rx="2" /><rect x="11" y="16" width="13" height="8" rx="2" /><path d="M7 10v10h4" /></svg> },
  { w: 'w-[80px]', label: 'Relationship', icon: <svg width="26" height="26" viewBox="0 0 26 26" {...TB_STROKE} strokeWidth="2"><path d="M6 3h12a4 4 0 0 1 0 10H9a4 4 0 0 0 0 9h13" /><path d="M20 19l3 3-3 3M8 1 5 3l3 3" strokeWidth="1.6" /></svg> },
  { w: 'w-[65px]', dim: true, label: 'Summary', icon: <svg width="26" height="26" viewBox="0 0 26 26" {...TB_STROKE}><path d="M3 6h10M3 13h10M3 20h10M17 3c3 0 2 4 3 8 0 1 1 2 3 2-2 0-3 1-3 2-1 4 0 8-3 8" /></svg> },
  { w: 'w-[65px]', dim: true, label: 'Boundary', icon: <svg width="26" height="26" viewBox="0 0 26 26" {...TB_STROKE}><path d="M10 3h11a2 2 0 0 1 2 2v16a2 2 0 0 1-2 2H7a4 4 0 0 1-4-4V9z" /><path d="M13 3v9h10" /></svg> },
  { w: 'w-[80px]', label: 'Add symbol', icon: <svg width="26" height="26" viewBox="0 0 26 26" {...TB_STROKE}><path d="M13 23H4a2 2 0 0 1-2-2V4a2 2 0 0 1 2-2h16a2 2 0 0 1 2 2v10" /><path d="M12 7l2 3 3 .5-2 2.500.5 3-3.500-1.500-3 1.500.5-3-2-2.500 3-.5z" strokeWidth="1.4" /><path d="M20 16v9M16 21h9" /></svg> },
  { w: 'w-[50px]', label: 'Insert', icon: <svg width="26" height="26" viewBox="0 0 26 26" {...TB_STROKE}><path d="M13 23H4a2 2 0 0 1-2-2V4a2 2 0 0 1 2-2h18a1 1 0 0 1 1 1v11" /><path d="M7 8h11M7 13h6" /><path d="M20 16v9M16 21h9" /></svg> },
  { w: 'w-[50px]', label: 'Shape', icon: <svg width="26" height="26" viewBox="0 0 26 26" {...TB_STROKE}><rect x="3" y="3" width="20" height="20" rx="2" /></svg> },
  { w: 'w-[54px]', on: true, label: 'Beautify', icon: <svg width="26" height="26" viewBox="0 0 26 26" {...TB_STROKE} strokeWidth="2"><path d="M13 3v6M3 13h6M17 13h6M6 6l4 4M20 6l-4 4M6 20l4-4M14 14l8 8M13 17v6" /></svg> },
  { w: 'w-[56px]', label: <span className="block text-center leading-[18px]">Format<br />Painter</span>, icon: <BrushIcon size={26} /> },
];

function FloatingToolbar() {
  return (
    <div className="absolute left-[620px] top-[434px] w-[726px] h-[99px] rounded-[9px] bg-white shadow-[0_2px_12px_rgba(0,0,0,0.12)] flex text-[13px] text-[#333] pt-[10px]">
      <div className="w-[72px] flex flex-col items-center border-r border-[#ececec] h-[80px]">
        <div className="h-[40px] flex items-center"><EdrawM id="m1" size={28} /></div>
        <div className="mt-[5px] leading-[18px]">Edraw AI</div>
      </div>
      {TOOLS.map((t, i) => (
        <div key={i} className={`${t.w} flex flex-col items-center ${t.dim ? 'text-[#b0b0b0]' : ''}`}>
          <div className={`h-[40px] w-[40px] flex items-center justify-center rounded-[6px] ${t.on ? 'bg-[#f0f0f0]' : ''}`}>{t.icon}</div>
          <div className="mt-[5px] leading-[18px] whitespace-nowrap">{t.label}</div>
        </div>
      ))}
      <div className="flex-1 flex flex-col items-center text-[#333]">
        <Pin size={14} fill="#333" className="rotate-45 mt-[-1px]" />
        <div className="mt-[12px] flex flex-col gap-[4px]">
          <span className="w-[3px] h-[3px] rounded-full bg-[#ddd]" />
          <span className="w-[3px] h-[3px] rounded-full bg-[#ddd]" />
          <span className="w-[3px] h-[3px] rounded-full bg-[#ddd]" />
        </div>
        <svg width="14" height="14" viewBox="0 0 14 14" fill="none" stroke="#555" strokeWidth="1.2" className="mt-[19px]">
          <path d="M1 5h4V1M13 9H9v4" />
        </svg>
      </div>
    </div>
  );
}

/* ---------- context menu ---------- */

const MI = { fill: 'none', stroke: '#444', strokeWidth: 1.7 };
const MENU: [string, React.ReactNode][] = [
  ['Style', <svg key="s" width="24" height="24" viewBox="0 0 24 24" {...MI}><path d="M2 16V4a2 2 0 0 1 2-2h11M22 8v12a2 2 0 0 1-2 2H9" /><path d="M8 16 19 4l1 1L10 18z" fill="#444" /><circle cx="5" cy="20" r="1.6" fill="#777" stroke="none" /></svg>],
  ['Layout', <svg key="l" width="24" height="24" viewBox="0 0 24 24" {...MI}><rect x="8" y="2" width="8" height="6" /><rect x="1" y="16" width="8" height="6" /><rect x="15" y="16" width="8" height="6" /><path d="M12 8v4M5 16v-4h14v4" /></svg>],
  ['Connector Style', <svg key="c" width="24" height="24" viewBox="0 0 24 24" {...MI}><path d="M4 12h6M18 3h-5a2 2 0 0 0-2 2v14a2 2 0 0 0 2 2h5" /><circle cx="3" cy="12" r="2" fill="#777" stroke="none" /><circle cx="21" cy="3" r="2" fill="#777" stroke="none" /><circle cx="21" cy="21" r="2" fill="#777" stroke="none" /></svg>],
];
const MENU2: [string, React.ReactNode][] = [
  ['Branch Fill', <svg key="f" width="24" height="24" viewBox="0 0 24 24" {...MI}><path d="M9 2 20 12l-7 8-10-8z" /><path d="M9 2l3 3" /><circle cx="22" cy="18" r="1.2" fill="#444" stroke="none" /></svg>],
  ['Branch Line', <SquarePen key="b" size={23} strokeWidth={1.7} className="text-[#444]" />],
  ['Theme color', <span key="p" className="relative flex"><Palette size={25} strokeWidth={1.7} className="text-[#333]" /><span className="absolute left-[5px] top-[9px] w-[3px] h-[3px] rounded-full bg-[#f05a28]" /><span className="absolute left-[9px] top-[5px] w-[3px] h-[3px] rounded-full bg-[#f5c42c]" /><span className="absolute left-[14px] top-[5px] w-[3px] h-[3px] rounded-full bg-[#3cc47c]" /><span className="absolute left-[18px] top-[9px] w-[3px] h-[3px] rounded-full bg-[#4a7cf0]" /></span>],
  ['Theme Font', <span key="a" className="text-[20px] leading-none text-[#333] font-['Liberation_Sans',sans-serif]">Aa</span>],
  ['Rainbow', <svg key="r" width="24" height="24" viewBox="0 0 24 24"><rect x="1" y="1" width="22" height="22" rx="2" fill="none" stroke="#444" strokeWidth="1.7" /><rect x="5" y="6" width="6" height="3" fill="#f77" /><rect x="13" y="6" width="6" height="3" fill="#fb6" /><rect x="5" y="11" width="6" height="3" fill="#f9d" /><rect x="13" y="11" width="6" height="3" fill="#6d8" /><rect x="5" y="16" width="6" height="3" fill="#79f" /><rect x="13" y="16" width="6" height="3" fill="#c8f" /></svg>],
];

const MenuRow = ({ label, icon, hot }: { label: string; icon: React.ReactNode; hot?: boolean }) => (
  <div className={hot
    ? 'relative z-10 ml-[9px] mr-[6px] h-[46px] -my-[3px] border-[5px] border-[#e01f2d] bg-[#f4f4f4] flex items-center text-[14px] text-[#333]'
    : 'ml-[9px] mr-[6px] h-[40px] border-[5px] border-transparent flex items-center text-[14px] text-[#333]'}>
    <span className="w-[24px] ml-[9px] flex justify-center">{icon}</span>
    <span className="ml-[10px]">{label}</span>
    <span className="ml-auto mr-[15px] flex"><CaretRight /></span>
  </div>
);

/* ---------- layout thumbnails ---------- */

const LS = { fill: 'none', stroke: '#555', strokeWidth: 1.6 };
const F = ({ x, y, w = 10, h = 4.5 }: { x: number; y: number; w?: number; h?: number }) => <rect x={x} y={y} width={w} height={h} rx="0.8" fill="#444" />;
const O = ({ x, y, w = 10, h = 5.5 }: { x: number; y: number; w?: number; h?: number }) => <rect x={x} y={y} width={w} height={h} rx="2" {...LS} strokeWidth="1.8" />;
const P = ({ d }: { d: string }) => <path d={d} {...LS} />;

const MAP4 = <>
  <F x={13} y={15.8} />
  <O x={2} y={3} /><O x={24} y={3} /><O x={2} y={27} /><O x={24} y={27} />
</>;
const rightTree = <g>
  <F x={1} y={15.8} />
  <O x={24} y={3} /><O x={24} y={15} /><O x={24} y={27} />
  <P d="M11 18H24M24 6h-3a3 3 0 0 0-3 3v18a3 3 0 0 0 3 3h3" />
</g>;
const downTree = <g>
  <F x={13} y={2} />
  <O x={2} y={24} w={5.5} h={9} /><O x={15} y={24} w={5.5} h={9} /><O x={28} y={24} w={5.5} h={9} />
  <P d="M18 6.500V24M18 13H9a4 4 0 0 0-4 4v7M18 13h9a4 4 0 0 1 4 4v7" />
</g>;
const centerTree = <g>
  <F x={13} y={2} />
  <O x={2} y={16} /><O x={2} y={27} /><O x={24} y={16} /><O x={24} y={27} />
  <P d="M18 6V34M12 19h12M12 30h12" />
</g>;
const hangTree = <g>
  <F x={6} y={2} />
  <O x={18} y={13} w={11} /><O x={18} y={25} w={11} />
  <P d="M10 6.500V24a4 4 0 0 0 4 4h4M10 16h8" />
</g>;
const flipX = 'translate(36 0) scale(-1 1)';
const flipY = 'translate(0 36) scale(1 -1)';

const LAYOUTS: React.ReactNode[] = [
  <g>{MAP4}<P d="M12 6c4 0 5 1 5 5v5M24 6c-4 0-5 1-5 5v5M12 30c4 0 5-1 5-5v-5M24 30c-4 0-5-1-5-5v-5" /></g>,
  <g><F x={13} y={15.8} /><O x={2} y={3} /><O x={24} y={3} /><O x={2} y={27} /><P d="M12 6c4 0 5 1 5 5v5M24 6c-4 0-5 1-5 5v5M12 30c4 0 5-1 5-5v-5M19 20c0 8 3 11 8 11 3 0 5-3 5-7M29 25l3-3 3 3" /></g>,
  <g>{MAP4}<O x={2} y={3} /><P d="M5 10v11M2 17l3 4 3-4M31 10v11M28 17l3 4 3-4M12 6c4 0 5 1 5 5v5M24 6c-4 0-5 1-5 5v5M12 30c4 0 5-1 5-5v-5M24 30c-4 0-5-1-5-5v-5" /></g>,
  rightTree,
  <g transform={flipX}>{rightTree}</g>,
  downTree,
  <g transform={flipY}>{downTree}</g>,
  <g><F x={13} y={15.8} /><O x={2} y={2} /><O x={24} y={2} /><O x={2} y={28.500} /><O x={24} y={28.500} /><P d="M12 5c3 0 3 5 6 5s3-5 6-5M18 10v6M18 20v3M7 28v-1a4 4 0 0 1 4-4h14a4 4 0 0 1 4 4v1" /></g>,
  centerTree,
  <g transform={flipY}>{centerTree}</g>,
  hangTree,
  <g transform={flipX}>{hangTree}</g>,
  <g transform={flipY}>{hangTree}</g>,
  <g transform={`${flipX} ${flipY}`}>{hangTree}</g>,
];

function ContextMenu() {
  return (
    <>
      <div className="absolute left-[1216px] top-[541px] w-[243px] h-[349px] rounded-[9px] bg-white shadow-[0_2px_12px_rgba(0,0,0,0.12)] pt-[9px]">
        {MENU.map(([t, ic]) => <MenuRow key={t} label={t} icon={ic} hot={t === 'Layout'} />)}
        <div className="mx-[26px] mt-[4px] mb-[5px] h-px bg-[#e8e8e8]" />
        {MENU2.map(([t, ic]) => <MenuRow key={t} label={t} icon={ic} />)}
      </div>
      <div className="absolute left-[1458px] top-[596px] w-[274px] h-[271px] border-[5px] border-[#e01f2d] bg-white pl-[18px] pt-[14px] grid grid-cols-[repeat(4,60px)] auto-rows-[60px] content-start">
        {LAYOUTS.map((l, i) => (
          <div key={i} className={`w-[50px] h-[50px] flex items-center justify-center rounded-[5px] ${i === 0 ? 'border border-[#3d86c6]' : ''}`}>
            <svg width="36" height="36" viewBox="0 0 36 36">{l}</svg>
          </div>
        ))}
      </div>
    </>
  );
}

export default function App() {
  return (
    <div className="relative w-[1920px] h-[1021px] overflow-hidden flex flex-col bg-[#dcdde8] font-['Noto_Sans','Liberation_Sans',sans-serif]">
      <TitleBar />
      <TabBar />
      <Ribbon />
      <div className="flex h-[786px] shrink-0">
        <LeftPanel />
        <CanvasColumn />
        <RightPanel />
      </div>
      <StatusBar />
      <FloatingToolbar />
      <ContextMenu />
    </div>
  );
}
